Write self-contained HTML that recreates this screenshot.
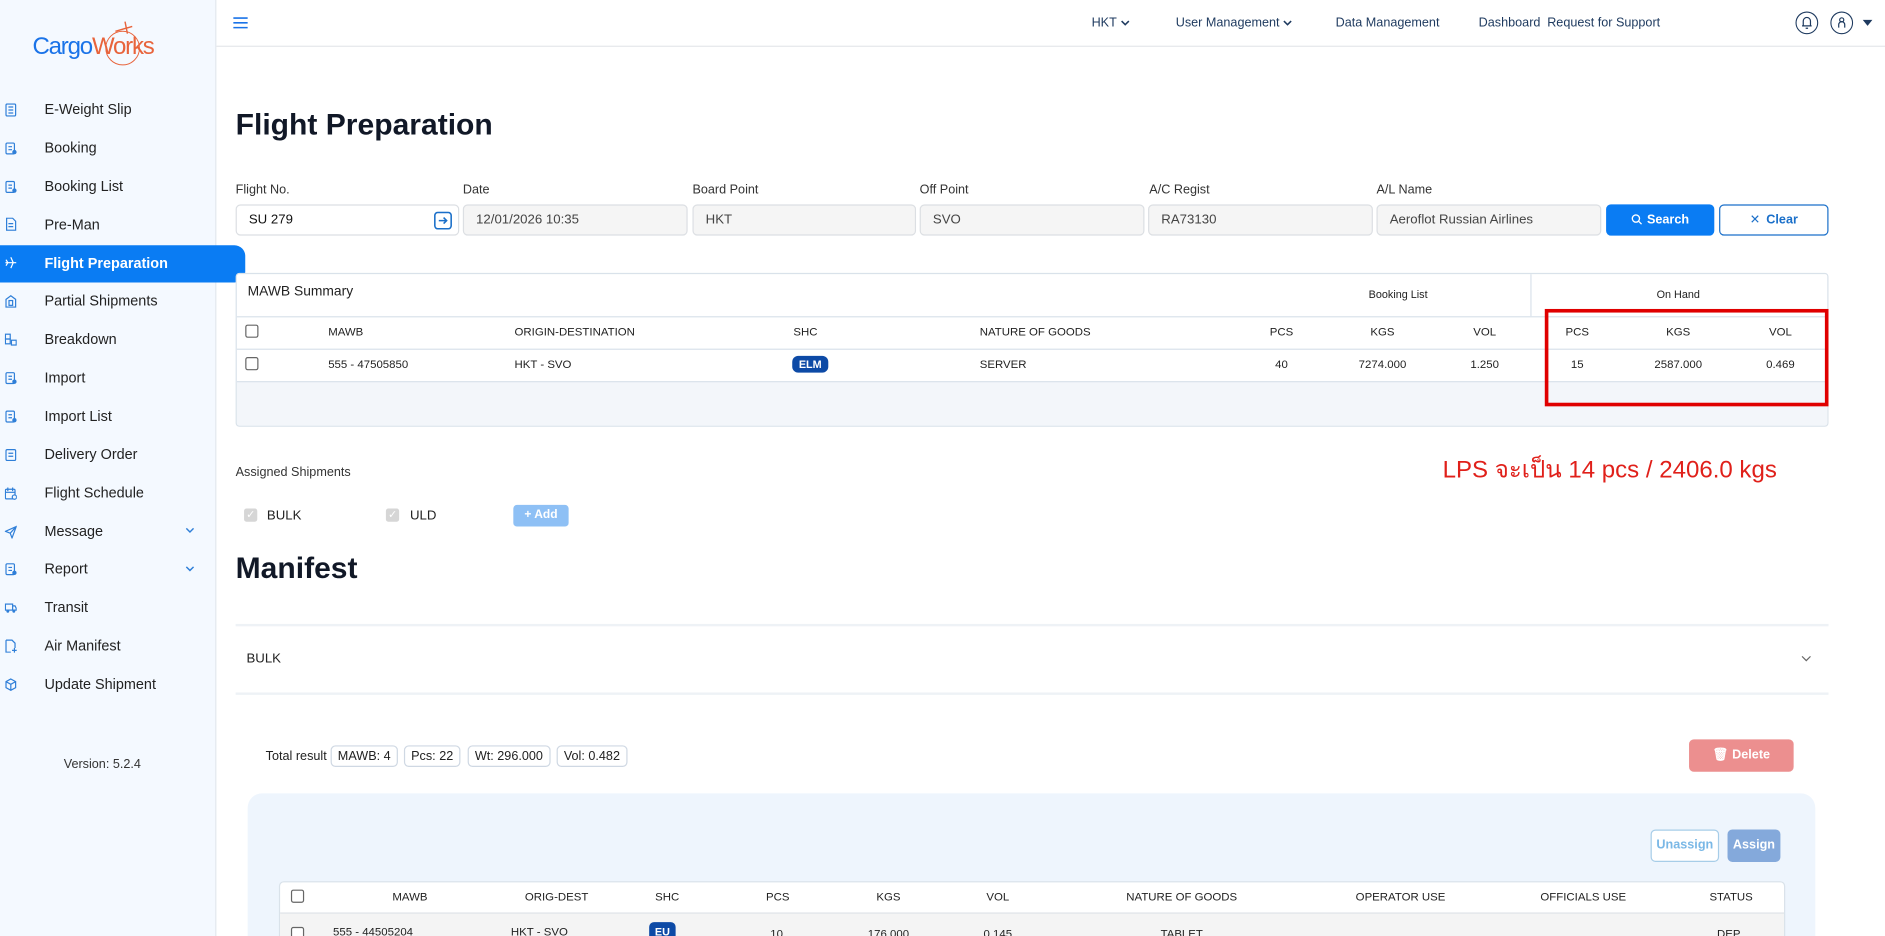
<!DOCTYPE html>
<html><head><meta charset="utf-8">
<style>
*{box-sizing:border-box;margin:0;padding:0}
html,body{width:1885px;height:936px;max-height:936px;overflow:hidden;background:#fff}
#w{position:absolute;left:0;top:0;width:1568px;height:778.6px;overflow:hidden;transform:scale(1.20217);transform-origin:0 0;font-family:"Liberation Sans",Arial,sans-serif;color:#1f2937}
.a{position:absolute;white-space:nowrap}
.side{position:absolute;left:0;top:0;width:180px;height:779px;background:#f4f9ff;border-right:1px solid #e3e8ee}
.mi{position:absolute;left:37px;font-size:12px;color:#222;line-height:14px}
.ic{position:absolute;left:4px;width:10px;height:11px}
.lbl{position:absolute;font-size:10.5px;color:#333}
.inp{position:absolute;top:170px;height:26px;border:1px solid #dcdfe3;border-radius:4px;background:#f5f5f5;font-size:11px;color:#444;padding-left:10px;line-height:24px}
.th{position:absolute;font-size:9.5px;color:#222;transform:translateX(-50%)}
.td{position:absolute;font-size:9.5px;color:#222}
.cb{position:absolute;width:11px;height:11px;border:1.3px solid #666;border-radius:2px;background:#fff}
.chip{position:absolute;top:620px;height:18px;border:1px solid #cfd8e3;border-radius:4px;font-size:10.5px;line-height:16px;padding:0 5px;color:#222}
.nav{position:absolute;top:13px;font-size:10.5px;color:#1e3a5f;white-space:nowrap}
</style></head><body><div id="w">
<div class="side"></div>
<div class="a" style="left:27px;top:27px;font-size:20px;letter-spacing:-1px;line-height:24px"><span style="color:#1a73e8">Cargo</span><span style="color:#e8643c">Works</span></div>
<svg class="a" style="left:82px;top:16px" width="40" height="40" viewBox="0 0 40 40"><circle cx="20" cy="24" r="14" fill="none" stroke="#e8643c" stroke-width="0.8"/><path d="M14 10 L28 6 M22 2 L24 12" stroke="#e8643c" stroke-width="1.2" fill="none"/></svg>

<div class="a" style="left:0;top:204px;width:204px;height:31px;background:#0a7cf3;border-radius:0 9px 9px 0"></div>

<svg class="ic" style="top:86px" viewBox="0 0 10 11"><rect x="1" y="0.5" width="8" height="10" rx="1" fill="none" stroke="#2f7fd8"/><path d="M3 3h4M3 5.5h4M3 8h4" stroke="#2f7fd8"/></svg>
<div class="mi" style="top:84px">E-Weight Slip</div>
<svg class="ic" style="top:118px" viewBox="0 0 10 11"><rect x="1" y="1" width="7" height="9" rx="1" fill="none" stroke="#2f7fd8"/><path d="M3 4h3M3 6.5h3" stroke="#2f7fd8"/><circle cx="8" cy="8.5" r="1.8" fill="#2f7fd8"/></svg>
<div class="mi" style="top:116px">Booking</div>
<svg class="ic" style="top:150px" viewBox="0 0 10 11"><rect x="1" y="1" width="7" height="9" rx="1" fill="none" stroke="#2f7fd8"/><path d="M3 4h3M3 6.5h3" stroke="#2f7fd8"/><circle cx="8" cy="8.5" r="1.8" fill="#2f7fd8"/></svg>
<div class="mi" style="top:148px">Booking List</div>
<svg class="ic" style="top:181px" viewBox="0 0 10 11"><path d="M1.5 0.5h5l2.5 2.5v7.5h-7.5z" fill="none" stroke="#2f7fd8"/><path d="M3 5h4M3 7.5h4" stroke="#2f7fd8"/></svg>
<div class="mi" style="top:180px">Pre-Man</div>
<svg class="ic" style="top:213px" viewBox="0 0 10 11"><path d="M0.5 5.5h9M5 1l2 4.5-2 4.5M1 3l1.5 2.5L1 8" stroke="#fff" fill="none"/></svg>
<div class="mi" style="top:212px;color:#fff;font-weight:bold">Flight Preparation</div>
<svg class="ic" style="top:245px" viewBox="0 0 10 11"><path d="M1 4l4-3 4 3v6.5h-8z" fill="none" stroke="#2f7fd8"/><rect x="3.5" y="5" width="3" height="4" fill="none" stroke="#2f7fd8"/></svg>
<div class="mi" style="top:243px">Partial Shipments</div>
<svg class="ic" style="top:277px" viewBox="0 0 10 11"><rect x="0.5" y="1" width="4" height="4" fill="none" stroke="#2f7fd8"/><rect x="0.5" y="5" width="4" height="4" fill="none" stroke="#2f7fd8"/><rect x="5.5" y="6" width="4" height="4" fill="none" stroke="#2f7fd8"/></svg>
<div class="mi" style="top:275px">Breakdown</div>
<svg class="ic" style="top:309px" viewBox="0 0 10 11"><rect x="1" y="1" width="7" height="9" rx="1" fill="none" stroke="#2f7fd8"/><path d="M3 4h3M3 6.5h3" stroke="#2f7fd8"/><circle cx="8" cy="8.5" r="1.8" fill="#2f7fd8"/></svg>
<div class="mi" style="top:307px">Import</div>
<svg class="ic" style="top:341px" viewBox="0 0 10 11"><rect x="1" y="1" width="7" height="9" rx="1" fill="none" stroke="#2f7fd8"/><path d="M3 4h3M3 6.5h3" stroke="#2f7fd8"/><circle cx="8" cy="8.5" r="1.8" fill="#2f7fd8"/></svg>
<div class="mi" style="top:339px">Import List</div>
<svg class="ic" style="top:373px" viewBox="0 0 10 11"><rect x="1" y="1" width="8" height="9" rx="1" fill="none" stroke="#2f7fd8"/><path d="M3 4h4M3 6.5h4" stroke="#2f7fd8"/></svg>
<div class="mi" style="top:371px">Delivery Order</div>
<svg class="ic" style="top:405px" viewBox="0 0 10 11"><rect x="0.5" y="2" width="8" height="8" rx="1" fill="none" stroke="#2f7fd8"/><path d="M2.5 0.5v3M6.5 0.5v3M0.5 4.5h8" stroke="#2f7fd8"/><circle cx="8" cy="8.5" r="1.8" fill="#f4f9ff" stroke="#2f7fd8"/></svg>
<div class="mi" style="top:403px">Flight Schedule</div>
<svg class="ic" style="top:437px" viewBox="0 0 10 11"><path d="M9.5 1L0.5 5l4 1.5 1.5 4z M4.5 6.5L9.5 1" fill="none" stroke="#2f7fd8"/></svg>
<div class="mi" style="top:435px">Message</div>
<svg class="a" style="left:154px;top:438px" width="8" height="6" viewBox="0 0 8 6"><path d="M1 1.5l3 3 3-3" fill="none" stroke="#2f7fd8" stroke-width="1.2"/></svg>
<svg class="ic" style="top:468px" viewBox="0 0 10 11"><rect x="1" y="1" width="7" height="9" rx="1" fill="none" stroke="#2f7fd8"/><path d="M3 4h3M3 6.5h3" stroke="#2f7fd8"/><circle cx="8" cy="8.5" r="1.8" fill="#2f7fd8"/></svg>
<div class="mi" style="top:466px">Report</div>
<svg class="a" style="left:154px;top:470px" width="8" height="6" viewBox="0 0 8 6"><path d="M1 1.5l3 3 3-3" fill="none" stroke="#2f7fd8" stroke-width="1.2"/></svg>
<svg class="ic" style="top:500px" viewBox="0 0 10 11"><rect x="0.5" y="2.5" width="6" height="5" fill="none" stroke="#2f7fd8"/><path d="M6.5 4h2l1 2v1.5h-3" fill="none" stroke="#2f7fd8"/><circle cx="2.5" cy="8.5" r="1.2" fill="#2f7fd8"/><circle cx="7.5" cy="8.5" r="1.2" fill="#2f7fd8"/></svg>
<div class="mi" style="top:498px">Transit</div>
<svg class="ic" style="top:532px" viewBox="0 0 10 11"><path d="M1 0.5h5l2.5 2.5v4M5 10.5h-4v-10" fill="none" stroke="#2f7fd8"/><path d="M6 9h4M8 7v4" stroke="#2f7fd8"/></svg>
<div class="mi" style="top:530px">Air Manifest</div>
<svg class="ic" style="top:564px" viewBox="0 0 10 11"><path d="M5 0.8l4 2.2v5l-4 2.2-4-2.2v-5z M1 3l4 2.2 4-2.2M5 5.2v5" fill="none" stroke="#2f7fd8"/></svg>
<div class="mi" style="top:562px">Update Shipment</div>
<div class="a" style="left:53px;top:630px;font-size:10.5px;color:#333">Version: 5.2.4</div>

<!-- topbar -->
<div class="a" style="left:180px;top:38px;width:1388px;height:1px;background:#e5e7eb"></div>
<svg class="a" style="left:194px;top:14px" width="13" height="10" viewBox="0 0 13 10"><path d="M0 1h12M0 5h12M0 9h12" stroke="#1a73e8" stroke-width="1.3"/></svg>
<div class="nav" style="left:908px">HKT</div>
<svg class="a" style="left:932px;top:16px" width="8" height="6" viewBox="0 0 8 6"><path d="M1 1.5l3 3 3-3" fill="none" stroke="#1e3a5f" stroke-width="1.3"/></svg>
<div class="nav" style="left:978px">User Management</div>
<svg class="a" style="left:1067px;top:16px" width="8" height="6" viewBox="0 0 8 6"><path d="M1 1.5l3 3 3-3" fill="none" stroke="#1e3a5f" stroke-width="1.3"/></svg>
<div class="nav" style="left:1111px">Data Management</div>
<div class="nav" style="left:1230px">Dashboard</div>
<div class="nav" style="left:1287px">Request for Support</div>
<svg class="a" style="left:1493px;top:9px" width="20" height="20" viewBox="0 0 20 20"><circle cx="10" cy="10" r="9" fill="#fff" stroke="#1e3a5f" stroke-width="0.9"/><path d="M7 12.5v-4a3 3 0 0 1 6 0v4zM6 12.5h8M9 14.5h2" fill="none" stroke="#1e3a5f" stroke-width="1"/></svg>
<svg class="a" style="left:1522px;top:9px" width="20" height="20" viewBox="0 0 20 20"><circle cx="10" cy="10" r="9" fill="#fff" stroke="#1e3a5f" stroke-width="0.9"/><circle cx="10" cy="7.5" r="1.7" fill="none" stroke="#1e3a5f"/><path d="M7.5 14v-2.5a2.5 2.5 0 0 1 5 0V14" fill="none" stroke="#1e3a5f"/></svg>
<svg class="a" style="left:1549px;top:16px" width="9" height="6" viewBox="0 0 9 6"><path d="M0.5 0.5h8l-4 5z" fill="#1e3a5f"/></svg>

<!-- title & form -->
<div class="a" style="left:196px;top:89px;font-size:25px;font-weight:bold;color:#111827;line-height:30px">Flight Preparation</div>
<div class="lbl" style="left:196px;top:152px">Flight No.</div>
<div class="lbl" style="left:385px;top:152px">Date</div>
<div class="lbl" style="left:576px;top:152px">Board Point</div>
<div class="lbl" style="left:765px;top:152px">Off Point</div>
<div class="lbl" style="left:956px;top:152px">A/C Regist</div>
<div class="lbl" style="left:1145px;top:152px">A/L Name</div>
<div class="inp" style="left:196px;width:186px;background:#fff;color:#111">SU 279</div>
<svg class="a" style="left:361px;top:176px" width="15" height="15" viewBox="0 0 15 15"><rect x="0.7" y="0.7" width="13.6" height="13.6" rx="2.5" fill="none" stroke="#1a6fc9" stroke-width="1.3"/><path d="M4 7.5h6.5M8 5l2.5 2.5L8 10" fill="none" stroke="#1a6fc9" stroke-width="1.3"/></svg>
<div class="inp" style="left:385px;width:187px">12/01/2026 10:35</div>
<div class="inp" style="left:576px;width:186px">HKT</div>
<div class="inp" style="left:765px;width:187px">SVO</div>
<div class="inp" style="left:955px;width:187px">RA73130</div>
<div class="inp" style="left:1145px;width:187px">Aeroflot Russian Airlines</div>
<div class="a" style="left:1336px;top:170px;width:90px;height:26px;background:#0a7cf3;border-radius:4px;color:#fff;font-size:10.5px;font-weight:bold;text-align:center;line-height:26px"><svg width="9" height="9" viewBox="0 0 9 9" style="vertical-align:-1px;margin-right:4px"><circle cx="3.8" cy="3.8" r="3" fill="none" stroke="#fff" stroke-width="1.1"/><path d="M6 6l2.5 2.5" stroke="#fff" stroke-width="1.1"/></svg>Search</div>
<div class="a" style="left:1430px;top:170px;width:91px;height:26px;border:1px solid #1a6fc9;border-radius:4px;color:#1a6fc9;font-size:10.5px;font-weight:bold;text-align:center;line-height:24px"><span style="font-weight:normal;margin-right:5px">✕</span>Clear</div>

<!-- summary card -->
<div class="a" style="left:196px;top:227px;width:1325px;height:128px;border:1px solid #d9e2ea;border-radius:3px;background:#fff;overflow:hidden">
 <div class="a" style="left:0;top:89px;width:1325px;height:40px;background:#f3f6fa;border-top:1px solid #d9e2ea"></div>
 <div class="a" style="left:0;top:35px;width:1325px;height:1px;background:#d9e2ea"></div>
 <div class="a" style="left:0;top:62px;width:1325px;height:1px;background:#d9e2ea"></div>
 <div class="a" style="left:1076px;top:0;width:1px;height:35px;background:#d9e2ea"></div>
</div>
<div class="a" style="left:206px;top:237px;font-size:11.5px;color:#222">MAWB Summary</div>
<div class="th" style="left:1163px;top:240px;font-size:9px">Booking List</div>
<div class="th" style="left:1396px;top:240px;font-size:9px">On Hand</div>
<div class="cb" style="left:204px;top:270px"></div>
<div class="td" style="left:273px;top:271px">MAWB</div>
<div class="td" style="left:428px;top:271px">ORIGIN-DESTINATION</div>
<div class="td" style="left:660px;top:271px">SHC</div>
<div class="td" style="left:815px;top:271px">NATURE OF GOODS</div>
<div class="th" style="left:1066px;top:271px">PCS</div>
<div class="th" style="left:1150px;top:271px">KGS</div>
<div class="th" style="left:1235px;top:271px">VOL</div>
<div class="th" style="left:1312px;top:271px">PCS</div>
<div class="th" style="left:1396px;top:271px">KGS</div>
<div class="th" style="left:1481px;top:271px">VOL</div>
<div class="cb" style="left:204px;top:297px"></div>
<div class="td" style="left:273px;top:298px">555 - 47505850</div>
<div class="td" style="left:428px;top:298px">HKT - SVO</div>
<div class="a" style="left:659px;top:296px;width:30px;height:14px;background:#0d4aa6;border-radius:5px;color:#fff;font-size:9px;font-weight:bold;text-align:center;line-height:14px">ELM</div>
<div class="td" style="left:815px;top:298px">SERVER</div>
<div class="th" style="left:1066px;top:298px">40</div>
<div class="th" style="left:1150px;top:298px">7274.000</div>
<div class="th" style="left:1235px;top:298px">1.250</div>
<div class="th" style="left:1312px;top:298px">15</div>
<div class="th" style="left:1396px;top:298px">2587.000</div>
<div class="th" style="left:1481px;top:298px">0.469</div>
<div class="a" style="left:1285px;top:257px;width:236px;height:81px;border:3px solid #e00000"></div>
<div class="a" style="left:1200px;top:374px;font-size:20px;color:#e0201a;font-family:'Liberation Sans','DejaVu Sans',sans-serif">LPS จะเป็น 14 pcs / 2406.0 kgs</div>

<div class="a" style="left:196px;top:387px;font-size:10.5px;color:#333">Assigned Shipments</div>
<div class="a" style="left:203px;top:423px;width:11px;height:11px;background:#d6d6d6;border-radius:2px;color:#fff;font-size:9px;line-height:11px;text-align:center">✓</div>
<div class="a" style="left:222px;top:423px;font-size:11px;color:#222">BULK</div>
<div class="a" style="left:321px;top:423px;width:11px;height:11px;background:#d6d6d6;border-radius:2px;color:#fff;font-size:9px;line-height:11px;text-align:center">✓</div>
<div class="a" style="left:341px;top:423px;font-size:11px;color:#222">ULD</div>
<div class="a" style="left:427px;top:420px;width:46px;height:18px;background:#8ec0f5;border-radius:3px;color:#fff;font-size:10px;font-weight:bold;line-height:18px;text-align:center">+ Add</div>

<div class="a" style="left:196px;top:458px;font-size:25px;font-weight:bold;color:#111827;line-height:30px">Manifest</div>
<div class="a" style="left:196px;top:519px;width:1325px;height:2px;background:#eef2f6"></div>
<div class="a" style="left:205px;top:542px;font-size:11px;color:#222">BULK</div>
<svg class="a" style="left:1498px;top:545px" width="9" height="6" viewBox="0 0 9 6"><path d="M1 1l3.5 3.5L8 1" fill="none" stroke="#666"/></svg>
<div class="a" style="left:196px;top:576px;width:1325px;height:2px;background:#eef2f6"></div>

<div class="a" style="left:221px;top:623px;font-size:10.5px;color:#222">Total result</div>
<div class="chip" style="left:275px">MAWB: 4</div>
<div class="chip" style="left:336px">Pcs: 22</div>
<div class="chip" style="left:389px">Wt: 296.000</div>
<div class="chip" style="left:463px">Vol: 0.482</div>
<div class="a" style="left:1405px;top:615px;width:87px;height:27px;background:#ec8f8f;border-radius:4px;color:#fff;font-size:10.5px;font-weight:bold;text-align:center;line-height:27px">🗑 Delete</div>

<div class="a" style="left:206px;top:660px;width:1304px;height:140px;background:#eef5fd;border-radius:12px"></div>
<div class="a" style="left:1373px;top:690px;width:57px;height:27px;background:#fff;border:1px solid #a7cde8;border-radius:4px;color:#7ab8e6;font-size:10.5px;font-weight:bold;text-align:center;line-height:25px">Unassign</div>
<div class="a" style="left:1437px;top:690px;width:44px;height:27px;background:#84a9db;border-radius:4px;color:#fff;font-size:10.5px;font-weight:bold;text-align:center;line-height:27px">Assign</div>
<div class="a" style="left:232px;top:733px;width:1253px;height:60px;background:#fff;border:1px solid #d9e2ea;border-radius:4px"></div>
<div class="a" style="left:233px;top:759px;width:1251px;height:30px;background:#f4f4f4;border-top:1px solid #dfe3e8"></div>
<div class="cb" style="left:242px;top:740px"></div>
<div class="th" style="left:341px;top:741px">MAWB</div>
<div class="th" style="left:463px;top:741px">ORIG-DEST</div>
<div class="th" style="left:555px;top:741px">SHC</div>
<div class="th" style="left:647px;top:741px">PCS</div>
<div class="th" style="left:739px;top:741px">KGS</div>
<div class="th" style="left:830px;top:741px">VOL</div>
<div class="th" style="left:983px;top:741px">NATURE OF GOODS</div>
<div class="th" style="left:1165px;top:741px">OPERATOR USE</div>
<div class="th" style="left:1317px;top:741px">OFFICIALS USE</div>
<div class="th" style="left:1440px;top:741px">STATUS</div>
<div class="cb" style="left:242px;top:771px"></div>
<div class="td" style="left:277px;top:770px">555 - 44505204</div>
<div class="td" style="left:425px;top:770px">HKT - SVO</div>
<div class="a" style="left:540px;top:767px;width:22px;height:16px;background:#0d4aa6;border-radius:4px;color:#fff;font-size:9px;font-weight:bold;text-align:center;line-height:16px">EU</div>
<div class="th" style="left:646px;top:772px">10</div>
<div class="th" style="left:739px;top:772px">176.000</div>
<div class="th" style="left:830px;top:772px">0.145</div>
<div class="th" style="left:983px;top:772px">TABLET</div>
<div class="th" style="left:1438px;top:772px">DEP</div>
</div></body></html>
